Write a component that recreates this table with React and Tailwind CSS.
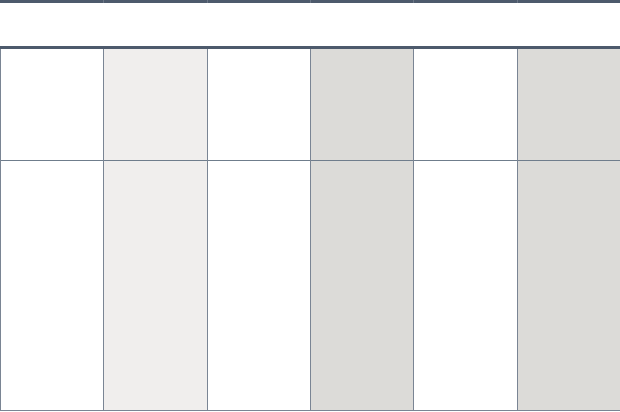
import React from 'react';

const cols = ['bg-white', 'bg-[#f0eeed]', 'bg-white', 'bg-[#dcdbd8]', 'bg-white', 'bg-[#dcdbd8]'];

export default function App() {
  return (
    <div className="w-[620px] h-[412px] bg-white overflow-hidden">
      {/* header row */}
      <div className="grid grid-cols-6 h-[49px] border-b-[3px] border-[#4d5a6c]">
        {cols.map((c, i) => (
          <div key={i} className="border-t-[3px] border-[#4d5a6c]">
            <div className={`h-[3px] -mt-[3px] ${i > 0 ? 'border-l border-[#6b7686]' : ''}`} />
          </div>
        ))}
      </div>
      {/* body */}
      <div className="grid grid-cols-6 border-b border-[#7a8594]">
        {cols.map((c, i) => (
          <div key={i} className={`${c} border-l border-[#7a8594]`}>
            <div className="h-[112px] border-b border-[#6f7d8c]" />
            <div className="h-[249px]" />
          </div>
        ))}
      </div>
    </div>
  );
}
